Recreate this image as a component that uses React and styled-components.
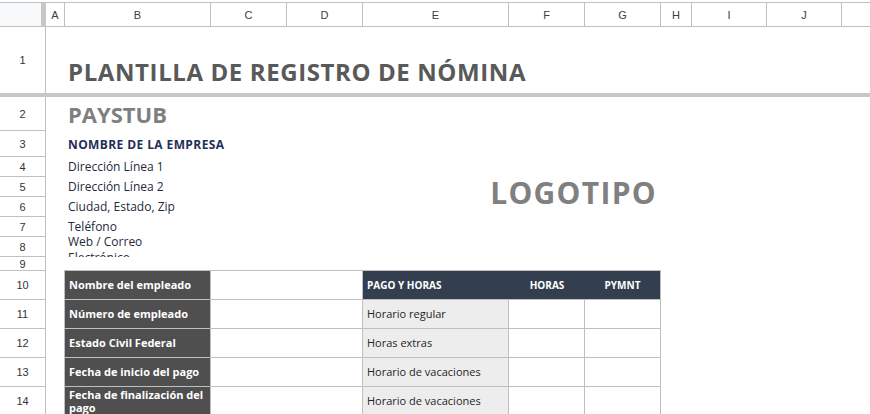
import React from "react";
import styled, { createGlobalStyle } from "styled-components";

const Global = createGlobalStyle`
  html, body { margin: 0; padding: 0; overflow: hidden; background: #fff; }
  * { box-sizing: border-box; }
`;

const GRID = "#c0c0c0";
const BODY_FONT = `"Open Sans", "DejaVu Sans", sans-serif`;

const Sheet = styled.div`
  display: grid;
  padding-top: 2px;
  grid-template-columns: 46px 19px 146px 76px 76px 146px 76px 76px 31px 75px 75px 1fr;
  grid-template-rows: 25px 66px 4px 34px 26px 20px 20px 20px 20px 20px 14px 29px 29px 29px 29px 29px;
  width: 870px;
  font-family: ${BODY_FONT};
`;

const Corner = styled.div`
  grid-column: 1;
  grid-row: 1;
  background: #f8f9fa;
  border-top: 1px solid ${GRID};
  border-bottom: 1px solid ${GRID};
  border-right: 5px solid #c7c7c7;
`;

const ColHead = styled.div`
  grid-row: 1;
  display: flex;
  align-items: center;
  justify-content: center;
  border-top: 1px solid ${GRID};
  border-bottom: 1px solid ${GRID};
  border-right: ${(p) => (p.$last ? "none" : `1px solid ${GRID}`)};
  font-family: "Liberation Sans", Arial, sans-serif;
  font-size: 11px;
  color: #3c3c3c;
  background: #fff;
`;

const RowHead = styled.div`
  grid-column: 1;
  display: flex;
  align-items: center;
  justify-content: center;
  border-right: 1px solid ${GRID};
  border-bottom: ${(p) => (p.$noLine ? "none" : `1px solid ${GRID}`)};
  font-family: "Liberation Sans", Arial, sans-serif;
  font-size: 11px;
  color: #333;
  overflow: hidden;
`;

const FreezeBar = styled.div`
  grid-column: 1 / -1;
  grid-row: 3;
  background: #c7c7c7;
`;

const Title = styled.div`
  grid-column: 3 / -1;
  grid-row: 2;
  display: flex;
  align-items: flex-end;
  padding: 0 0 5px 3px;
  font-size: 24px;
  font-weight: 700;
  letter-spacing: 0.6px;
  color: #595959;
  white-space: nowrap;
`;

const Paystub = styled.div`
  grid-column: 3 / 6;
  grid-row: 4;
  display: flex;
  align-items: center;
  padding: 0 0 1px 3px;
  font-size: 22px;
  font-weight: 700;
  color: #7f7f7f;
`;

const Company = styled.div`
  grid-column: 3 / 6;
  grid-row: 5;
  display: flex;
  align-items: center;
  padding-left: 3px;
  font-size: 12px;
  font-weight: 700;
  letter-spacing: 0.4px;
  color: #1f3058;
  white-space: nowrap;
`;

const Address = styled.div`
  grid-column: 3;
  grid-row: ${(p) => p.$row};
  display: flex;
  align-items: ${(p) => (p.$wrap ? "flex-start" : "center")};
  padding-left: 3px;
  font-size: 12px;
  line-height: ${(p) => (p.$wrap ? "16px" : "14px")};
  color: #1f2a3c;
  white-space: nowrap;
  overflow: ${(p) => (p.$wrap ? "hidden" : "visible")};
`;

const Wrapped = styled.span`
  margin-top: -3px;
`;

const Logo = styled.div`
  grid-column: 6 / 9;
  grid-row: 5 / 11;
  display: flex;
  align-items: center;
  justify-content: flex-end;
  padding: 0 4px 4px 0;
  font-size: 30px;
  font-weight: 700;
  letter-spacing: 1.3px;
  color: #808080;
`;

const Table = styled.div`
  grid-column: 3 / 9;
  grid-row: 12 / 17;
  margin: -1px 0 0 -1px;
  display: grid;
  grid-template-columns: 145px 151px 145px 75px 75px;
  grid-template-rows: repeat(5, 28px);
  gap: 1px;
  padding: 1px;
  background: #bfbfbf;
`;

const Label = styled.div`
  background: #4f4f4f;
  color: #fff;
  font-weight: 700;
  font-size: 11px;
  line-height: 13px;
  display: flex;
  align-items: center;
  padding: 0 4px 1px;
`;

const Blank = styled.div`
  background: #fff;
`;

const Item = styled.div`
  background: #ededed;
  color: #262626;
  font-size: 11px;
  display: flex;
  align-items: center;
  padding: 0 4px 1px;
  white-space: nowrap;
`;

const HeadBand = styled.div`
  grid-column: 3 / 6;
  background: #333f4f;
  display: grid;
  grid-template-columns: 146px 76px 1fr;
  color: #fff;
  font-weight: 700;
  font-size: 10px;
`;

const HeadText = styled.div`
  display: flex;
  align-items: center;
  justify-content: ${(p) => (p.$center ? "center" : "flex-start")};
  padding: 0 0 1px ${(p) => (p.$center ? "0" : "4px")};
  white-space: nowrap;
`;

const cols = ["A", "B", "C", "D", "E", "F", "G", "H", "I", "J", ""];
const rowNums = [1, 2, 3, 4, 5, 6, 7, 8, 9, 10, 11, 12, 13, 14];

const labels = [
  "Nombre del empleado",
  "Número de empleado",
  "Estado Civil Federal",
  "Fecha de inicio del pago",
  "Fecha de finalización del pago",
];
const items = ["Horario regular", "Horas extras", "Horario de vacaciones", "Horario de vacaciones"];

export default function App() {
  return (
    <>
      <Global />
      <Sheet>
        <Corner />
        {cols.map((c, i) => (
          <ColHead key={i} style={{ gridColumn: i + 2 }} $last={i === cols.length - 1}>
            {c}
          </ColHead>
        ))}
        {rowNums.map((n) => {
          const gridRow = n === 1 ? 2 : n + 2;
          return (
            <RowHead key={n} style={{ gridRow }} $noLine={n === 1}>
              {n}
            </RowHead>
          );
        })}
        <FreezeBar />
        <Title>PLANTILLA DE REGISTRO DE NÓMINA</Title>
        <Paystub>PAYSTUB</Paystub>
        <Company>NOMBRE DE LA EMPRESA</Company>
        <Address $row={6}>Dirección Línea 1</Address>
        <Address $row={7}>Dirección Línea 2</Address>
        <Address $row={8}>Ciudad, Estado, Zip</Address>
        <Address $row={9}>Teléfono</Address>
        <Address $row={10} $wrap>
          <Wrapped>
            Web / Correo
            <br />
            Electrónico
          </Wrapped>
        </Address>
        <Logo>LOGOTIPO</Logo>
        <Table>
          <Label>{labels[0]}</Label>
          <Blank />
          <HeadBand>
            <HeadText>PAGO Y HORAS</HeadText>
            <HeadText $center>HORAS</HeadText>
            <HeadText $center>PYMNT</HeadText>
          </HeadBand>
          {items.map((it, i) => (
            <React.Fragment key={i}>
              <Label>{labels[i + 1]}</Label>
              <Blank />
              <Item>{it}</Item>
              <Blank />
              <Blank />
            </React.Fragment>
          ))}
        </Table>
      </Sheet>
    </>
  );
}
